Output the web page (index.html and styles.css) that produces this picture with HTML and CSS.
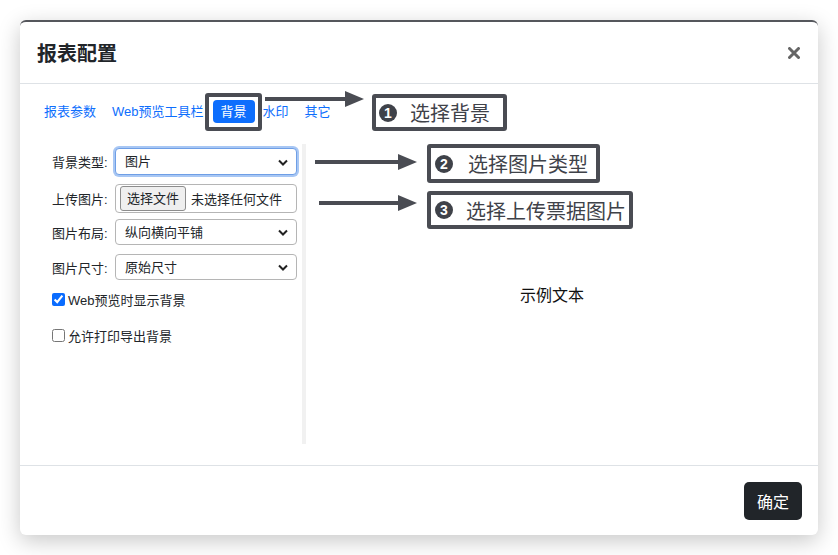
FILE: index.html
```html
<!DOCTYPE html>
<html lang="zh-CN">
<head>
    <meta charset="UTF-8">
    <meta name="viewport" content="width=device-width, initial-scale=1.0">
    <title>报表配置</title>
    <link rel="stylesheet" href="styles.css">
</head>
<body>
<div class="page">
    <div class="modal">
        <div class="modal-header">
            <h5 class="modal-title">报表配置</h5>
            <button class="close-btn" type="button">
                <svg width="12" height="12" viewBox="0 0 12 12">
                    <path d="M1.5 1.5 L10.5 10.5 M10.5 1.5 L1.5 10.5" stroke="#666" stroke-width="3" stroke-linecap="round"/>
                </svg>
            </button>
        </div>

        <div class="modal-body">
            <!-- Tabs -->
            <div class="nav">
                <a class="nav-link">报表参数</a>
                <a class="nav-link">Web预览工具栏</a>
                <a class="nav-link active">背景</a>
                <a class="nav-link">水印</a>
                <a class="nav-link">其它</a>
            </div>

            <div class="content">
                <div class="settings">
                    <div class="form-row row-1">
                        <label class="form-label">背景类型:</label>
                        <div class="select-wrap">
                            <select class="focused">
                                <option>图片</option>
                                <option>颜色</option>
                            </select>
                            <svg class="chevron" width="10" height="7" viewBox="0 0 10 7">
                                <polyline points="1,1.5 5,5.5 9,1.5" fill="none" stroke="#222" stroke-width="2"/>
                            </svg>
                        </div>
                    </div>
                    <div class="form-row row-2">
                        <label class="form-label">上传图片:</label>
                        <div class="file-input">
                            <span class="file-btn">选择文件</span>
                            <span class="file-name">未选择任何文件</span>
                        </div>
                    </div>
                    <div class="form-row row-3">
                        <label class="form-label">图片布局:</label>
                        <div class="select-wrap">
                            <select>
                                <option>纵向横向平铺</option>
                            </select>
                            <svg class="chevron" width="10" height="7" viewBox="0 0 10 7">
                                <polyline points="1,1.5 5,5.5 9,1.5" fill="none" stroke="#222" stroke-width="2"/>
                            </svg>
                        </div>
                    </div>
                    <div class="form-row row-4">
                        <label class="form-label">图片尺寸:</label>
                        <div class="select-wrap">
                            <select>
                                <option>原始尺寸</option>
                            </select>
                            <svg class="chevron" width="10" height="7" viewBox="0 0 10 7">
                                <polyline points="1,1.5 5,5.5 9,1.5" fill="none" stroke="#222" stroke-width="2"/>
                            </svg>
                        </div>
                    </div>
                    <label class="check check-1"><input type="checkbox" checked> Web预览时显示背景</label>
                    <label class="check check-2"><input type="checkbox"> 允许打印导出背景</label>
                </div>
                <div class="preview">示例文本</div>
            </div>
        </div>

        <div class="modal-footer">
            <button class="btn-dark" type="button">确定</button>
        </div>
    </div>

    <!-- Annotations -->
    <div class="mark mark-tab"></div>
    <svg class="arrow arrow-1" width="100" height="18" viewBox="0 0 100 18">
        <line x1="0" y1="9" x2="82" y2="9" stroke="#4a4c53" stroke-width="4"/>
        <polygon points="80,1 99,9 80,17" fill="#4a4c53"/>
    </svg>
    <div class="callout callout-1"><span class="num">1</span>选择背景</div>

    <svg class="arrow arrow-2" width="103" height="18" viewBox="0 0 103 18">
        <line x1="0" y1="9" x2="85" y2="9" stroke="#4a4c53" stroke-width="4"/>
        <polygon points="83,1 102,9 83,17" fill="#4a4c53"/>
    </svg>
    <div class="callout callout-2"><span class="num">2</span>选择图片类型</div>

    <svg class="arrow arrow-3" width="99" height="18" viewBox="0 0 99 18">
        <line x1="0" y1="9" x2="81" y2="9" stroke="#4a4c53" stroke-width="4"/>
        <polygon points="79,1 98,9 79,17" fill="#4a4c53"/>
    </svg>
    <div class="callout callout-3"><span class="num">3</span>选择上传票据图片</div>
</div>
</body>
</html>
```

FILE: styles.css
```css
body {
    margin: 0;
    background: #fff;
    font-family: "Liberation Sans", "Noto Sans CJK SC", sans-serif;
    color: #212529;
}
.page {
    position: relative;
    width: 838px;
    height: 555px;
    overflow: hidden;
}
.modal {
    margin: 20px 0 0 20px;
    width: 798px;
    height: 515px;
    box-sizing: border-box;
    background: #fff;
    border-top: 2px solid #55575c;
    border-radius: 6px;
    box-shadow: 0 6px 22px rgba(0, 0, 0, 0.22);
    display: flex;
    flex-direction: column;
}
.modal-header {
    display: flex;
    align-items: center;
    justify-content: space-between;
    height: 62px;
    box-sizing: border-box;
    padding: 0 18px 0 17px;
    border-bottom: 1px solid #dee2e6;
}
.modal-title {
    margin: 0;
    font-size: 20px;
    font-weight: 700;
    color: #212529;
}
.close-btn {
    border: 0;
    background: none;
    padding: 0;
    width: 12px;
    height: 12px;
    display: flex;
}
.modal-body {
    padding: 16px 16px 21px 16px;
    height: 381px;
    box-sizing: border-box;
}
.nav {
    display: flex;
    align-items: center;
    height: 23px;
}
.nav-link {
    font-size: 13px;
    color: #0d6efd;
    padding: 0 8px;
    line-height: 23px;
    white-space: nowrap;
}
.nav-link.active {
    background: #0d6efd;
    color: #fff;
    border-radius: 4px;
    margin-left: 1px;
}
.content {
    display: flex;
    margin-top: 21px;
    height: 300px;
}
.settings {
    border-right: 4px solid #f1f1f1;
    padding: 4px 5px 0 16px;
    width: 245px;
}
.form-row {
    display: flex;
    align-items: center;
}
.row-1 { height: 27px; margin-bottom: 9px; }
.row-2 { height: 29px; margin-bottom: 6px; }
.row-3 { height: 26px; margin-bottom: 9px; }
.row-4 { height: 26px; }
.form-label {
    width: 63px;
    flex-shrink: 0;
    font-size: 13px;
    color: #212529;
}
.select-wrap {
    position: relative;
    width: 182px;
    height: 100%;
}
.select-wrap select {
    appearance: none;
    width: 100%;
    height: 100%;
    box-sizing: border-box;
    border: 1px solid #b5b5b5;
    border-radius: 4px;
    background: #fff;
    padding: 0 24px 0 9px;
    font-family: "Liberation Sans", "Noto Sans CJK SC", sans-serif;
    font-size: 13px;
    color: #212529;
    outline: none;
}
.select-wrap select.focused {
    border-color: #6f9fe6;
    box-shadow: 0 0 0 2px #a8c7f4;
}
.chevron {
    position: absolute;
    right: 9px;
    top: 50%;
    margin-top: -3px;
    pointer-events: none;
}
.file-input {
    display: flex;
    align-items: center;
    gap: 5px;
    width: 182px;
    height: 100%;
    box-sizing: border-box;
    border: 1px solid #b5b5b5;
    border-radius: 4px;
    padding: 0 4px;
    font-size: 13px;
}
.file-btn {
    height: 25px;
    line-height: 23px;
    box-sizing: border-box;
    padding: 0 6px;
    border: 1px solid #8d8d8d;
    border-radius: 3px;
    background: #efefef;
    white-space: nowrap;
}
.file-name {
    white-space: nowrap;
}
.check {
    display: flex;
    align-items: center;
    gap: 3px;
    font-size: 13px;
    height: 20px;
}
.check input {
    margin: 0;
    width: 13px;
    height: 13px;
    accent-color: #0a6cff;
}
.check-1 { margin-top: 9px; }
.check-2 { margin-top: 16px; }
.preview {
    flex: 1;
    display: flex;
    align-items: center;
    justify-content: center;
    font-size: 16px;
    color: #111;
    padding-right: 4px;
}
.modal-footer {
    border-top: 1px solid #dee2e6;
    display: flex;
    justify-content: flex-end;
    padding: 16px 16px 0 0;
    flex: 1;
}
.btn-dark {
    width: 58px;
    height: 38px;
    border: 0;
    border-radius: 5px;
    background: #212529;
    color: #fff;
    font-family: "Liberation Sans", "Noto Sans CJK SC", sans-serif;
    font-size: 16px;
}

/* annotation overlays */
.mark {
    position: absolute;
    box-sizing: border-box;
    border: 4px solid #4a4c53;
    border-radius: 3px;
}
.mark-tab {
    left: 205px;
    top: 93px;
    width: 57px;
    height: 38px;
}
.arrow {
    position: absolute;
}
.arrow-1 { left: 265px; top: 90px; }
.arrow-2 { left: 315px; top: 153px; }
.arrow-3 { left: 319px; top: 194px; }
.callout {
    position: absolute;
    box-sizing: border-box;
    display: flex;
    align-items: center;
    gap: 13px;
    padding-left: 4px;
    border: 4px solid #4a4c53;
    border-radius: 3px;
    background: #fff;
    font-size: 20px;
    color: #3f4249;
    white-space: nowrap;
}
.callout-1 { left: 372px; top: 94px; width: 135px; height: 37px; padding-left: 3px; }
.callout-2 { left: 427px; top: 144px; width: 173px; height: 39px; gap: 15px; }
.callout-3 { left: 427px; top: 191px; width: 206px; height: 38px; }
.num {
    width: 18px;
    height: 18px;
    border-radius: 50%;
    background: #3f4249;
    color: #fff;
    font-size: 14px;
    font-weight: bold;
    display: flex;
    align-items: center;
    justify-content: center;
    flex-shrink: 0;
}
```
